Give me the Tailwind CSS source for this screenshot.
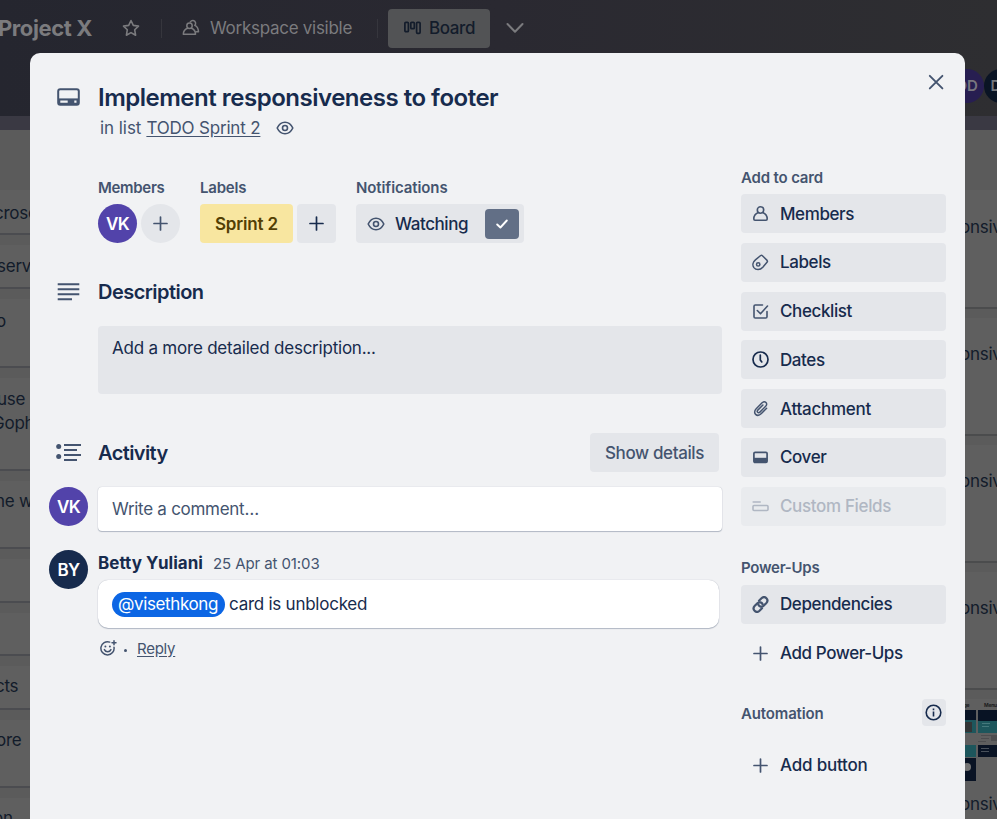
<!DOCTYPE html>
<html lang="en">
<head>
<meta charset="utf-8">
<title>Project X</title>
<script src="https://cdn.jsdelivr.net/npm/@tailwindcss/browser@4"></script>
</head>
<body class="bg-white font-['Inter','Liberation_Sans',sans-serif] text-[17px] leading-[22px] tracking-[-0.25px] text-[#172b4d]">
<div class="relative flex h-[819px] w-[997px] flex-col overflow-hidden bg-[#5b5b5b]">

  <!-- Board header -->
  <header class="flex h-[116px] shrink-0 flex-col bg-linear-to-r from-[#25262f] via-[#2a2931] to-[#2e2e31] text-[#7b7b7e]">
    <div class="flex h-[56px] items-center whitespace-nowrap">
      <h1 class="-ml-0.5 w-[94px] text-[22px] font-bold tracking-[-0.41px]">Project X</h1>
      <svg class="ml-[30px] size-[18px]" viewBox="0 0 18 18" fill="none" stroke="currentColor" stroke-width="1.6" stroke-linejoin="round"><path d="M9 1.5l2.3 4.9 5.2.7-3.8 3.7.9 5.4L9 13.6l-4.6 2.6.9-5.4L1.5 7.1l5.2-.7z"/></svg>
      <div class="ml-[21px] h-[19px] w-px bg-[#36363d]"></div>
      <svg class="ml-5 size-[18px]" viewBox="0 0 18 18" fill="none" stroke="currentColor" stroke-width="1.5" stroke-linecap="round" stroke-linejoin="round"><circle cx="7.5" cy="6.8" r="2.7"/><path d="M5.6 9.2C3.2 10 1.400 12 1.300 15.200h12.200c0-3.200-1.600-5.200-4.100-6M8.300 2.900C9 1.900 10 1.400 11.100 1.500c2.500.3 3.300 3.300 1.700 4.900 2 .9 3.500 3 3.700 6.300h-2"/></svg>
      <span class="ml-2.5 w-[142px] tracking-[-0.28px]">Workspace visible</span>
      <div class="ml-[25px] h-[19px] w-px bg-[#36363d]"></div>
      <div class="ml-2.5 flex h-[39px] w-[102px] items-center rounded-[4px] bg-[#525355] font-medium tracking-[-0.4px] text-[#131c2b]">
        <svg class="ml-4 h-[14px] w-[17px]" viewBox="0 0 17 14" fill="none" stroke="currentColor" stroke-width="1.7"><rect x=".9" y="1.300" width="3.500" height="9.400" rx="1"/><rect x="6.800" y="1.300" width="3.500" height="6.400" rx="1"/><rect x="12.600" y="1.300" width="3.500" height="11" rx="1"/></svg>
        <span class="ml-2">Board</span>
      </div>
      <svg class="ml-4 h-3 w-[18px]" viewBox="0 0 18 12" fill="none" stroke="currentColor" stroke-width="2" stroke-linecap="round" stroke-linejoin="round"><path d="M1.500 2L9 9.800 16.500 2"/></svg>
    </div>
    <div class="flex h-[60px] items-center justify-end text-[15px] font-semibold tracking-normal">
      <span class="flex size-[34px] shrink-0 items-center justify-center rounded-full bg-[#271e51] text-[#79777f]">DD</span>
      <span class="-mr-[21px] flex size-[34px] shrink-0 items-center justify-center rounded-full bg-[#0a1424] text-[#75777c]">DY</span>
    </div>
  </header>
  <div class="h-[14px] shrink-0 bg-[#3a3943]"></div>

  <!-- Lists behind the dialog -->
  <div class="flex h-[689px] shrink-0 justify-between pt-[60px] text-[#121b2a]">
    <div class="flex w-[60px] flex-col gap-[10px] whitespace-nowrap *:flex *:shrink-0 *:items-center *:border-b-2 *:border-[#4b4c50] *:bg-[#5f5f5f]">
      <div class="h-[45px] pt-0.5"><span class="-ml-[6px]">crosery</span></div>
      <div class="h-[44px]"><span class="-ml-[3px]">server</span></div>
      <div class="h-[69px] pb-6"><span class="-ml-[4px]">o</span></div>
      <div class="h-[93px] pb-[26px]"><p class="leading-[24px]"><span class="-ml-[3px]">use</span><br><span class="-ml-[8px]">Gopher</span></p></div>
      <div class="h-[68px] pb-[26px]"><span class="-ml-[5px]">ne with</span></div>
      <div class="h-[44px]"></div>
      <div class="h-[43px]"></div>
      <div class="h-[44px]"><span class="-mt-0.5 -ml-[5px]">cts</span></div>
      <div class="h-[68px] pb-[26px]"><span class="-ml-[4px]">ore</span></div>
      <div class="h-[68px] pb-[26px]"><span class="-ml-[7px]">on</span></div>
    </div>
    <div class="flex w-[60px] flex-col gap-[9px] overflow-hidden whitespace-nowrap *:shrink-0 *:border-b-2 *:border-[#4b4c4d] *:bg-[#5f5f5f] *:pl-[23px]">
      <div class="h-[119px] pt-[26px]">onsive</div>
      <div class="h-[118px] pt-[25px]">onsive</div>
      <div class="h-[118px] pt-[25px]">onsive</div>
      <div class="h-[118px] pt-[25px]">onsive</div>
      <div class="h-[130px] pt-[3px]">
        <svg class="ml-1 h-[82px] w-[33px]" viewBox="0 0 33 82"><g fill="#1c1c1e" font-family="Inter" font-size="5" font-weight="700"><text x="-3" y="5">age</text><text x="20" y="5">Menu</text></g><path fill="#081324" d="M0 8h12v10H0zM14 8h19v11H14z"/><path fill="#1d565c" d="M0 18h12v13H0zM14 19h19v12H14zM0 43h12v12H0z"/><path fill="#323536" d="M0 20h8v10H0z"/><path fill="#45787c" d="M18 21h8v1h-8zM18 24h7v1h-7z"/><path fill="#091324" d="M14 43h19v12H14zM0 56h12v23H0z"/><path fill="#48505a" d="M17 46h8v1h-8zM17 49h8v1h-8z"/><path fill="#4d4d4f" d="M17 33h10v1H17zM17 36h8v1h-8zM27 33h6v6h-6zM14 39h8v1h-8z"/><circle cx="3" cy="65" r="4" fill="#747474"/></svg>
        <div class="pt-[9px]">onsive</div>
      </div>
    </div>
  </div>

  <!-- Card dialog -->
  <section class="absolute left-[30px] top-[53px] h-[780px] w-[935px] rounded-[10px] bg-[#f1f2f4] pt-[30px]">
    <button class="absolute right-[20px] top-[20px] text-[#44546f]" aria-label="Close"><svg class="size-[18px]" viewBox="0 0 18 18" fill="none" stroke="currentColor" stroke-width="1.900" stroke-linecap="round"><path d="M2.800 2.800l12.600 12.600M15.400 2.800L2.800 15.400"/></svg></button>

    <div class="flex h-7 items-center">
      <div class="flex w-[68px] pl-[27px] text-[#44546f]"><svg class="h-[19px] w-[23px]" viewBox="0 0 23 19"><rect x="1.200" y="1.200" width="20.600" height="15.600" rx="2" fill="none" stroke="currentColor" stroke-width="2"/><path fill="currentColor" d="M1.500 10.400h20v6h-20z"/><path fill="#f1f2f4" d="M3.300 12.600h7.400v2.200H3.300zM17.300 12.600h2.200v2.200h-2.200z"/></svg></div>
      <h2 class="mt-px text-[24px] font-semibold leading-7 tracking-[-0.49px]">Implement responsiveness to footer</h2>
    </div>
    <div class="mt-1.5 flex h-[22px] items-center pl-[70px] text-[#44546f]">
      <span class="tracking-[-0.05px]">in list</span>
      <a class="ml-[5px] underline underline-offset-[2px] tracking-[-0.18px]">TODO Sprint 2</a>
      <svg class="ml-4 h-[14px] w-[18px]" viewBox="0 0 18 14" fill="none" stroke="currentColor" stroke-width="1.600"><path d="M1.200 7C3 3.200 5.800 1.200 9 1.200S15 3.200 16.800 7C15 10.800 12.200 12.800 9 12.800S3 10.800 1.200 7z"/><circle cx="9" cy="7" r="2.500"/></svg>
    </div>

    <div class="mt-[29px] flex items-start">
      <main class="w-[692px] pt-[10px]">
        <div class="flex pl-[68px]">
          <div class="w-[102px]">
            <h3 class="h-[26px] text-[15px] font-semibold leading-[19px] tracking-[-0.3px] text-[#44546f]">Members</h3>
            <div class="flex gap-1">
              <span class="flex size-[39px] items-center justify-center rounded-full bg-[#5243aa] font-semibold tracking-[-0.6px] text-white">VK</span>
              <span class="flex size-[39px] items-center justify-center rounded-full bg-[#e4e6ea] text-[#44546f]"><svg class="size-[17px]" viewBox="0 0 17 17" fill="none" stroke="currentColor" stroke-width="1.700" stroke-linecap="round"><path d="M8.500 2v13M2 8.500h13"/></svg></span>
            </div>
          </div>
          <div class="w-[156px]">
            <h3 class="h-[26px] text-[15px] font-semibold leading-[19px] tracking-[-0.2px] text-[#44546f]">Labels</h3>
            <div class="flex gap-1">
              <span class="flex h-[39px] w-[93px] items-center justify-center rounded-[4px] bg-[#f8e6a0] font-semibold tracking-[-0.15px] text-[#533f04]">Sprint 2</span>
              <span class="flex size-[39px] items-center justify-center rounded-[4px] bg-[#e4e6ea]"><svg class="size-[17px]" viewBox="0 0 17 17" fill="none" stroke="currentColor" stroke-width="1.700" stroke-linecap="round"><path d="M8.500 2v13M2 8.500h13"/></svg></span>
            </div>
          </div>
          <div>
            <h3 class="h-[26px] text-[15px] font-semibold leading-[19px] tracking-[-0.1px] text-[#44546f]">Notifications</h3>
            <div class="flex h-[39px] w-[168px] items-center rounded-[4px] bg-[#e4e6ea] pl-[11px]">
              <svg class="h-[14px] w-[18px] text-[#44546f]" viewBox="0 0 18 14" fill="none" stroke="currentColor" stroke-width="1.600"><path d="M1.200 7C3 3.200 5.800 1.200 9 1.200S15 3.200 16.800 7C15 10.800 12.200 12.800 9 12.800S3 10.800 1.200 7z"/><circle cx="9" cy="7" r="2.500"/></svg>
              <span class="ml-2.5 w-[90px] font-medium tracking-[-0.42px]">Watching</span>
              <span class="flex h-[30px] w-[34px] items-center justify-center rounded-[4px] bg-[#626f86] text-white"><svg class="h-[10px] w-3" viewBox="0 0 12 10" fill="none" stroke="currentColor" stroke-width="1.900" stroke-linecap="round" stroke-linejoin="round"><path d="M1.200 5.500l3.200 3L10.800 1.500"/></svg></span>
            </div>
          </div>
        </div>

        <div class="mt-9 flex h-[26px] items-center">
          <div class="w-[68px] pl-[27px] text-[#44546f]"><svg class="h-[18px] w-[23px]" viewBox="0 0 23 18" fill="none" stroke="currentColor" stroke-width="2"><path d="M.7 1.300h21.600M.7 6.300h21.600M.7 11.300h21.600M.7 16.300H15"/></svg></div>
          <h3 class="text-[20px] font-semibold tracking-[-0.54px]">Description</h3>
        </div>
        <div class="ml-[68px] mt-[21px] h-[68px] w-[624px] rounded-[4px] bg-[#e4e6ea] pl-[14px] pt-[11px] tracking-[-0.22px]">Add a more detailed description...</div>

        <div class="mt-[39px] flex h-[39px] items-center pr-[3px]">
          <div class="w-[68px] pl-[25px] text-[#44546f]"><svg class="h-[19px] w-[26px]" viewBox="0 0 26 19" fill="none" stroke="currentColor" stroke-width="2"><path d="M9 1.900h17M9 6.900h13M9 11.900h17M9 16.900h13"/><g fill="currentColor" stroke="none"><circle cx="3.700" cy="3.400" r="2.500"/><circle cx="3.700" cy="13.400" r="2.500"/></g></svg></div>
          <h3 class="mt-px flex-1 text-[20px] font-semibold tracking-[-0.6px]">Activity</h3>
          <button class="h-[39px] w-[129px] rounded-[4px] bg-[#e4e6ea] font-medium tracking-[-0.38px] text-[#44546f]">Show details</button>
        </div>

        <div class="mt-[15px] flex">
          <span class="ml-[19px] mr-[10px] flex size-[39px] items-center justify-center rounded-full bg-[#5243aa] font-semibold tracking-[-0.6px] text-white">VK</span>
          <div class="h-[44px] w-[624px] rounded-[4px] bg-white pl-[14px] pt-[11px] tracking-[-0.28px] text-[#44546f] shadow-[0_1px_1px_#091e4240,0_0_1px_#091e424f]">Write a comment…</div>
        </div>

        <div class="mt-[19px] flex">
          <span class="ml-[19px] mr-[10px] flex size-[39px] items-center justify-center rounded-full bg-[#172b4d] font-semibold tracking-[-0.6px] text-white">BY</span>
          <div class="flex-1">
            <div class="flex h-[26px] items-center"><span class="w-[115px] font-bold tracking-[0.04px]">Betty Yuliani</span><span class="mt-px text-[15px] tracking-[-0.1px] text-[#44546f]">25 Apr at 01:03</span></div>
            <div class="mt-1 flex h-[48px] w-[621px] items-center rounded-[10px] bg-white pl-[14px] shadow-[0_1px_1px_#091e4240,0_0_1px_#091e424f]">
              <span class="flex h-[25px] w-[113px] items-center rounded-full bg-[#0c66e4] pl-[6px] tracking-[-0.38px] text-white">@visethkong</span>
              <span class="ml-1">card is unblocked</span>
            </div>
            <div class="mt-[9px] flex h-[22px] items-center pl-0.5 text-[15px] text-[#44546f]">
              <svg class="size-[17px]" viewBox="0 0 17 17" fill="none" stroke="currentColor" stroke-width="1.500" stroke-linecap="round"><path d="M9.700 2.100A6.600 6.600 0 1 0 14 7.200M4.400 9.600c1.300 2.900 5.200 2.900 6.500 0M14 .8v4M12 2.800h4"/><g fill="currentColor" stroke="none"><circle cx="5.400" cy="6.600" r="1"/><circle cx="9.900" cy="6.600" r="1"/></g></svg>
              <span class="ml-[7px] mt-1 size-[3px] rounded-full bg-[#44546f]"></span>
              <a class="ml-[10px] mt-px underline underline-offset-[2px]">Reply</a>
            </div>
          </div>
        </div>
      </main>

      <aside class="ml-[19px] w-[205px] pt-px font-medium tracking-[-0.4px]">
        <h3 class="h-[25px] text-[15px] font-semibold leading-[18px] tracking-[-0.16px] text-[#44546f]">Add to card</h3>
        <div class="flex flex-col gap-[9.8px] *:flex *:h-[39px] *:items-center *:gap-[11px] *:rounded-[4px] *:pl-[11px]">
          <a class="bg-[#e4e6ea]"><svg class="size-[17px] text-[#44546f]" viewBox="0 0 17 17" fill="none" stroke="currentColor" stroke-width="1.600" stroke-linejoin="round"><circle cx="8.500" cy="5" r="3.200"/><path d="M6.300 7.400C3.500 8.400 1.800 11 1.800 14c0 .8.400 1.200 1.200 1.200h11c.8 0 1.200-.4 1.200-1.200 0-3-1.700-5.600-4.500-6.600"/></svg>Members</a>
          <a class="bg-[#e4e6ea]"><svg class="size-[17px] text-[#44546f]" viewBox="0 0 17 17" fill="none" stroke="currentColor" stroke-width="1.500" stroke-linejoin="round"><path d="M8.700 1.500q.9-.6 1.700.2l4.700 4.700q.7.800.1 1.700l-4.400 5.200C8 16.400 3.900 16.200 1.900 13.600.2 11.200.8 8 3.400 5.900z"/><circle cx="6.200" cy="10.400" r="1.700"/></svg>Labels</a>
          <a class="bg-[#e4e6ea]"><svg class="size-[17px] text-[#44546f]" viewBox="0 0 17 17" fill="none" stroke="currentColor" stroke-width="1.600" stroke-linecap="round" stroke-linejoin="round"><path d="M10.500 2H3.300Q2 2 2 3.300v10.400Q2 15 3.300 15h10.400q1.300 0 1.300-1.300V8.500M5.300 7.500l3.200 3.300 7-7.800"/></svg>Checklist</a>
          <a class="bg-[#e4e6ea]"><svg class="size-[17px]" viewBox="0 0 17 17" fill="none" stroke="currentColor" stroke-width="1.700" stroke-linecap="round" stroke-linejoin="round"><circle cx="8.500" cy="8.500" r="7.500"/><path d="M8.300 4v4.900l1.500 2"/></svg>Dates</a>
          <a class="bg-[#e4e6ea] tracking-[-0.26px]"><svg class="size-[17px] text-[#44546f]" viewBox="0 0 17 17" fill="none" stroke="currentColor" stroke-width="1.500" stroke-linecap="round"><path d="M14.600 8.300l-5.200 5.200c-4.400 4.400-9.300-.5-5.200-4.700l5.900-6c2.800-2.800 6.300.8 3.600 3.500l-5.800 5.800c-1.700 1.700-3.600-.4-2.100-2l5.100-5.100"/></svg>Attachment</a>
          <a class="bg-[#e4e6ea]"><svg class="size-[17px] text-[#44546f]" viewBox="0 0 17 17"><rect x="1.900" y="3.300" width="13.200" height="10.200" rx="1.200" fill="none" stroke="currentColor" stroke-width="1.700"/><path fill="currentColor" d="M2 8.800h13v4.500H2z"/></svg>Cover</a>
          <a class="bg-[#e9ebee] tracking-[-0.35px] text-[#b0b7c3]"><svg class="size-[17px]" viewBox="0 0 17 17" fill="none" stroke="currentColor" stroke-width="1.600" stroke-linecap="round"><path d="M1.200 4h7"/><rect x="1" y="7.500" width="15" height="5" rx="1"/></svg>Custom Fields</a>
        </div>
        <h3 class="mt-[33px] h-[26px] text-[15px] font-semibold leading-[18px] tracking-[-0.25px] text-[#44546f]">Power-Ups</h3>
        <div class="flex flex-col gap-[9.800px] *:flex *:h-[39px] *:items-center *:gap-[11px] *:rounded-[4px] *:pl-[11px]">
          <a class="bg-[#e4e6ea]"><svg class="size-[17px] text-[#44546f]" viewBox="0 0 17 17" fill="none" stroke="currentColor" stroke-width="2.200" stroke-linecap="round"><path d="M7 4.800l2.500-2.500c3.500-3.300 8 1.500 4.700 4.900l-2.800 2.600c-1.800 1.500-4.200.9-5-1"/><path d="M10 12.200l-2.500 2.500c-3.500 3.300-8-1.500-4.700-4.900l2.800-2.600c1.800-1.500 4.200-.9 5 1"/></svg>Dependencies</a>
          <a class="tracking-[-0.42px]"><svg class="size-[17px] text-[#44546f]" viewBox="0 0 17 17" fill="none" stroke="currentColor" stroke-width="1.700" stroke-linecap="round"><path d="M8.500 2v13M2 8.500h13"/></svg>Add Power-Ups</a>
        </div>
        <div class="mt-[26px] flex h-[27px] items-center justify-between">
          <h3 class="mt-[4px] text-[15px] font-semibold leading-[18px] tracking-[-0.15px] text-[#44546f]">Automation</h3>
          <span class="flex h-[27px] w-6 items-center rounded-[4px] bg-[#e4e6ea] pl-[3px]"><svg class="size-[17px]" viewBox="0 0 17 17" fill="none" stroke="currentColor" stroke-width="1.600"><circle cx="8.500" cy="8.500" r="7.300"/><path d="M8.500 7.400v5M8.500 4.500v1.800"/></svg></span>
        </div>
        <a class="mt-5 flex h-[39px] items-center gap-[11px] pl-[11px] tracking-[-0.2px]"><svg class="size-[17px] text-[#44546f]" viewBox="0 0 17 17" fill="none" stroke="currentColor" stroke-width="1.700" stroke-linecap="round"><path d="M8.500 2v13M2 8.500h13"/></svg>Add button</a>
      </aside>
    </div>
  </section>
</div>
</body>
</html>
